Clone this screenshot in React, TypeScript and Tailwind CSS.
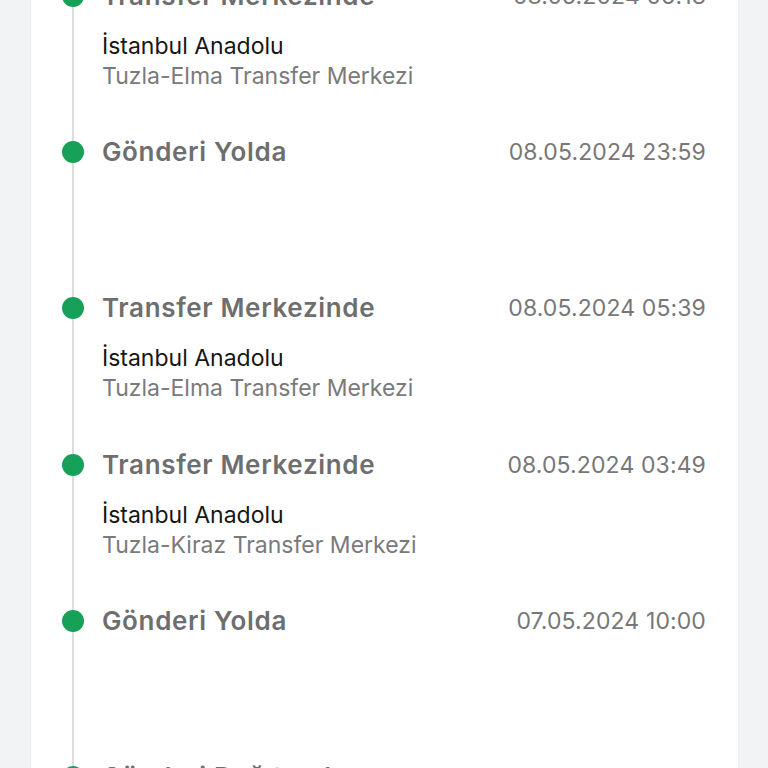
import React from 'react';

type Step = {
  title: string;
  date: string;
  city?: string;
  place?: string;
};

const steps: Step[] = [
  { title: 'Transfer Merkezinde', date: '08.05.2024 06:13', city: 'İstanbul Anadolu', place: 'Tuzla-Elma Transfer Merkezi' },
  { title: 'Gönderi Yolda', date: '08.05.2024 23:59' },
  { title: 'Transfer Merkezinde', date: '08.05.2024 05:39', city: 'İstanbul Anadolu', place: 'Tuzla-Elma Transfer Merkezi' },
  { title: 'Transfer Merkezinde', date: '08.05.2024 03:49', city: 'İstanbul Anadolu', place: 'Tuzla-Kiraz Transfer Merkezi' },
  { title: 'Gönderi Yolda', date: '07.05.2024 10:00' },
  { title: 'Gönderi Dağıtımda', date: '07.05.2024 09:12' },
];

function TimelineItem({ step }: { step: Step }) {
  return (
    <div className="flex h-[156.33px] gap-[18px]">
      {/* nokta ve çizgi */}
      <div className="flex w-[22px] shrink-0 flex-col items-center">
        <div className="h-[4px] w-[2px] bg-[#dcdcdc]" />
        <div className="h-[22px] w-[22px] rounded-full bg-[#17a058]" />
        <div className="w-[2px] flex-1 bg-[#dcdcdc]" />
      </div>

      <div className="flex min-w-0 flex-1 flex-col">
        <div className="flex items-center justify-between">
          <span className="text-[26px] font-semibold leading-[30px] tracking-[0.025em] text-[#6e6e6e]">
            {step.title}
          </span>
          <span className="text-[23px] leading-[30px] tracking-[0.005em] text-[#777777]">{step.date}</span>
        </div>
        {step.city && (
          <div className="mt-[20px] flex flex-col">
            <span className="text-[23px] leading-[30px] text-[#161616]">{step.city}</span>
            <span className="text-[23px] leading-[30px] text-[#7a7a7a]">{step.place}</span>
          </div>
        )}
      </div>
    </div>
  );
}

export default function App() {
  return (
    <div className="h-[768px] overflow-hidden bg-[#f2f3f5] font-['Inter',sans-serif]">
      <div className="ml-[31px] w-[707px] bg-white pl-[31px] pr-[32px] shadow-[0_0_1px_rgba(0,0,0,0.08)]">
        <div className="-mt-[19.3px]">
          {steps.map((step, i) => (
            <TimelineItem key={i} step={step} />
          ))}
        </div>
      </div>
    </div>
  );
}
